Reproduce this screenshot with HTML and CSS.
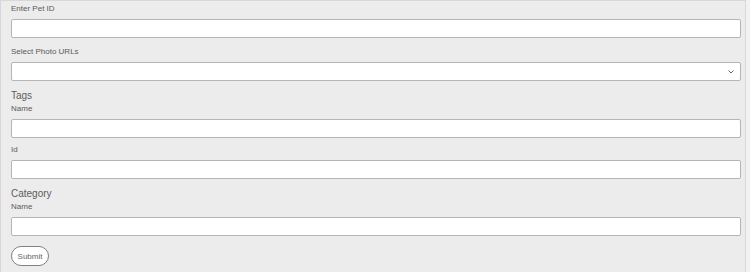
FILE: index.html
```html
<!DOCTYPE html>
<html>
<head>
<meta charset="utf-8">
<link rel="stylesheet" href="styles.css">
</head>
<body>
<form class="panel">
  <div class="field">
    <label class="label">Enter Pet ID</label>
    <input class="input" type="text">
  </div>
  <div class="field">
    <label class="label">Select Photo URLs</label>
    <div class="select">
      <svg class="chev" width="6" height="4" viewBox="0 0 6 4"><path d="M0.5 0.5 L3 3 L5.5 0.5" fill="none" stroke="#666" stroke-width="1"/></svg>
    </div>
  </div>
  <div class="group">
    <div class="heading">Tags</div>
    <div class="field">
      <label class="label">Name</label>
      <input class="input" type="text">
    </div>
    <div class="field tight">
      <label class="label">Id</label>
      <input class="input" type="text">
    </div>
  </div>
  <div class="group">
    <div class="heading">Category</div>
    <div class="field">
      <label class="label">Name</label>
      <input class="input" type="text">
    </div>
  </div>
  <button class="submit" type="button">Submit</button>
</form>
</body>
</html>
```
FILE: styles.css
```css
html, body {
  margin: 0;
  padding: 0;
  background: #f2f2f2;
}
body {
  font-family: "Liberation Sans", Arial, sans-serif;
  color: #555;
}
.panel {
  box-sizing: border-box;
  width: 746px;
  height: 272px;
  margin: 0;
  padding: 3px 4px 0 10px;
  background: #ececec;
  border: 1px solid #d8d8d8;
  border-bottom: none;
  display: flex;
  flex-direction: column;
}
.field {
  display: flex;
  flex-direction: column;
}
.label {
  font-size: 8px;
  line-height: 10px;
  color: #5a5a5a;
  margin-bottom: 5px;
}
.input, .select {
  box-sizing: border-box;
  height: 19px;
  width: 100%;
  margin: 0 0 9px 0;
  border: 1px solid #b5b5b5;
  border-radius: 2px;
  background: #fff;
  padding: 0;
}
.tight {
  margin-top: -2px;
}
.select {
  display: flex;
  align-items: center;
  justify-content: flex-end;
  padding-right: 6px;
}
.heading {
  font-size: 10px;
  line-height: 13px;
  color: #5c5c5c;
  margin: -1px 0 2px 0;
}
.submit {
  align-self: flex-start;
  margin-top: 1px;
  width: 38px;
  height: 20px;
  border: 1px solid #808080;
  border-radius: 10px;
  background: #fff;
  font-family: "Liberation Sans", Arial, sans-serif;
  font-size: 8px;
  color: #666;
  padding: 0;
}
```
